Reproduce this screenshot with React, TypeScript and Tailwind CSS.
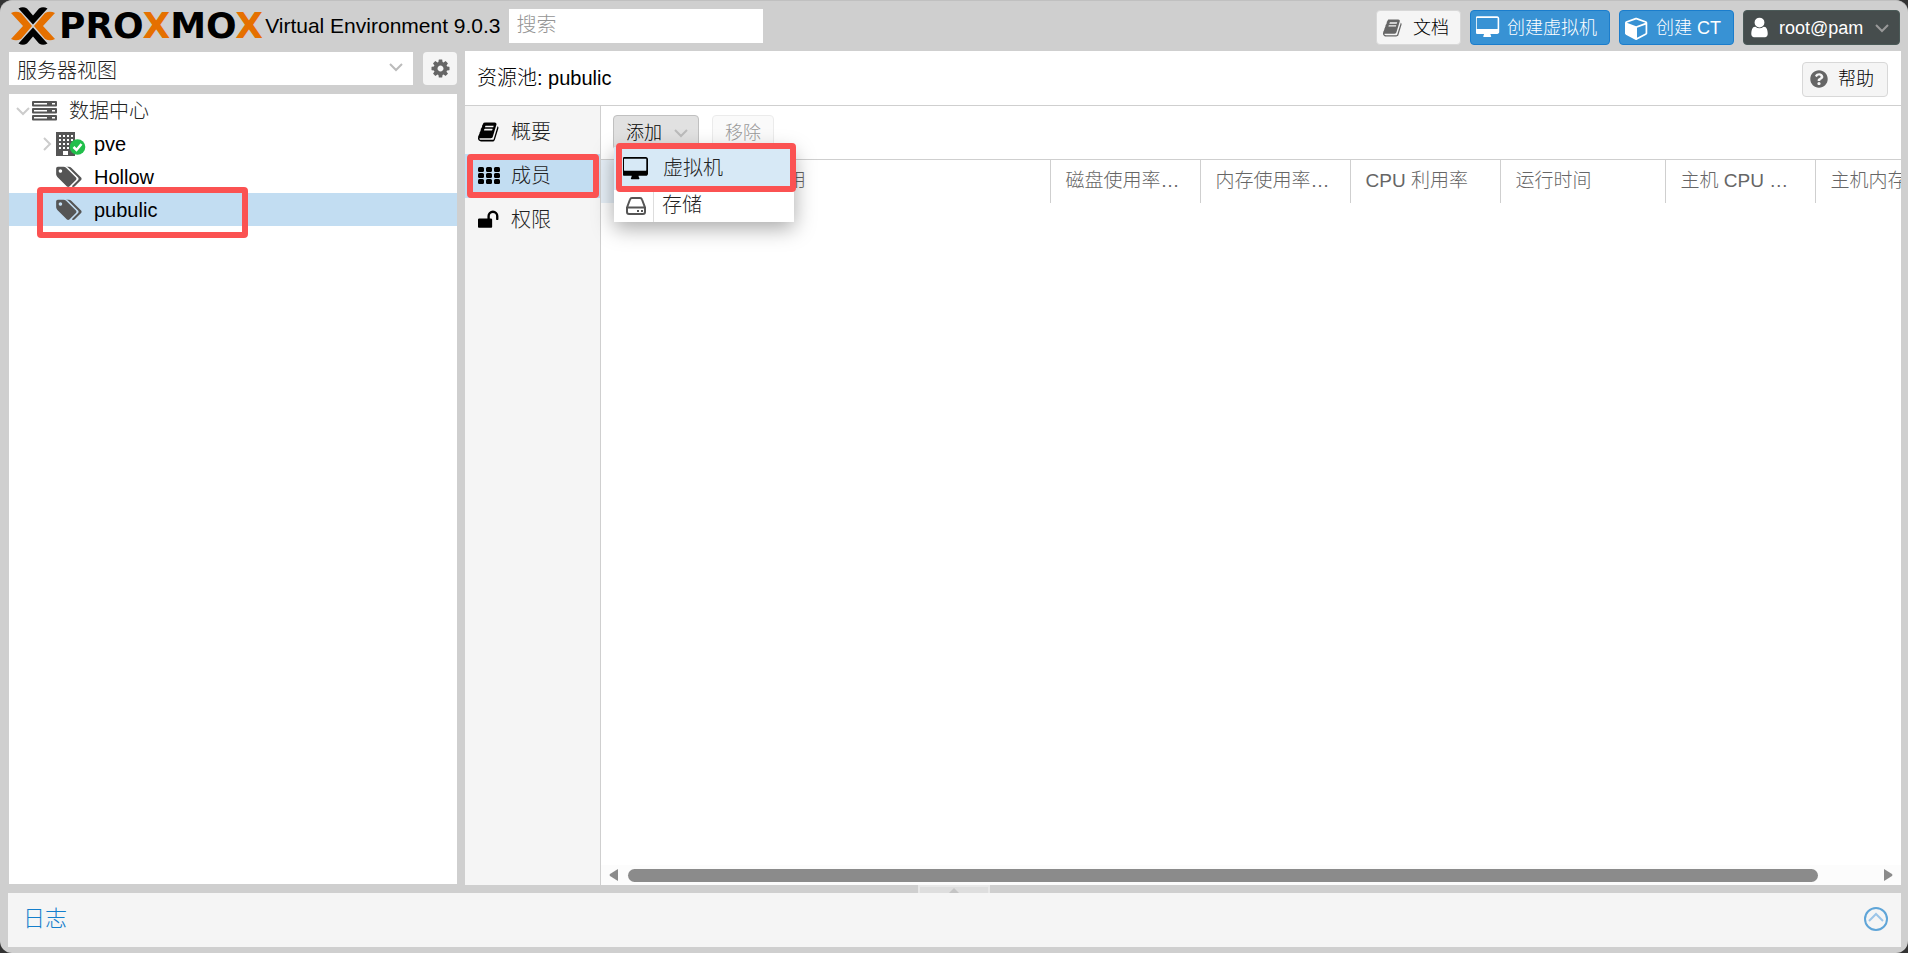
import type { ReactNode } from "react";
import { FaQuestionCircle } from "react-icons/fa";

const PATHS = {
    book: "M1639 478q40 57 18 129l-275 906q-19 64-76.5 107.5t-122.5 43.5h-923q-77 0-148.500-53.500t-99.500-131.500q-24-67-2-127 0-4 3-27t4-37q1-8-3-21.500t-3-19.500q2-11 8-21t16.500-23.500 16.500-23.500q23-38 45-91.500t30-91.500q3-10 .5-30t-.5-28q3-11 17-28t17-23q21-36 42-92t25-90q1-9-2.500-32t.5-28q4-13 22-30.500t22-22.500q19-26 42.500-84.500t27.500-96.500q1-8-3-25.500t-2-26.500q2-8 9-18t18-23 17-21q8-12 16.500-30.500t15-35 16-36 19.500-32 26.500-23.500 36-11.500 47.500 5.500l-1 3q38-9 51-9h761q74 0 114 56t18 130l-274 906q-36 119-71.500 153.500t-128.500 34.500h-869q-27 0-38 15-11 16-1 43 24 70 144 70h923q29 0 56-15.500t35-41.500l300-987q7-22 5-57 38 15 59 43zm-1064 2q-4 13 2 22.500t20 9.500h608q13 0 25.500-9.500t16.500-22.500l21-64q4-13-2-22.500t-20-9.500h-608q-13 0-25.500 9.500t-16.500 22.500zm-83 256q-4 13 2 22.500t20 9.500h608q13 0 25.500-9.500t16.500-22.500l21-64q4-13-2-22.500t-20-9.500h-608q-13 0-25.500 9.500t-16.500 22.500z",
    desktop:
        "M1728 992v-832q0-13-9.500-22.500t-22.500-9.500h-1600q-13 0-22.500 9.500t-9.500 22.500v832q0 13 9.500 22.500t22.500 9.500h1600q13 0 22.500-9.500t9.500-22.500zm128-832v1088q0 66-47 113t-113 47h-544q0 37 16 77.500t32 71 16 43.500q0 26-19 45t-45 19h-512q-26 0-45-19t-19-45q0-14 16-44t32-70 16-78h-544q-66 0-113-47t-47-113v-1088q0-66 47-113t113-47h1600q66 0 113 47t47 113z",
    cube: "M896 1629l640-349v-636l-640 233v752zm-64-865l698-254-698-254-698 254 698 254zm832-252v768q0 35-18 65t-49 47l-704 384q-28 16-61 16t-61-16l-704-384q-31-17-49-47t-18-65v-768q0-40 23-73t61-47l704-256q22-8 44-8t44 8l704 256q38 14 61 47t23 73z",
    user: "M1536 1399q0 109-62.500 187t-150.500 78h-854q-88 0-150.500-78t-62.500-187q0-85 8.500-160.500t31.500-152 58.500-131 94-89 134.500-34.500q131 128 313 128t313-128q76 0 134.500 34.500t94 89 58.500 131 31.500 152 8.500 160.500zm-256-887q0 159-112.500 271.500t-271.500 112.500-271.500-112.500-112.500-271.500 112.500-271.500 271.500-112.500 271.500 112.500 112.500 271.500z",
    cog: "M1152 896q0-106-75-181t-181-75-181 75-75 181 75 181 181 75 181-75 75-181zm512-109v222q0 12-8 23t-20 13l-185 28q-19 54-39 91 35 50 107 138 10 12 10 25t-9 23q-27 37-99 108t-94 71q-12 0-26-9l-138-108q-44 23-91 38-16 136-29 186-7 28-36 28h-222q-14 0-24.500-8.500t-11.500-21.500l-28-184q-49-16-90-37l-141 107q-10 9-25 9-14 0-25-11-126-114-165-168-7-10-7-23 0-12 8-23 15-21 51-66.500t54-70.500q-27-50-41-99l-183-27q-13-2-21-12.500t-8-23.500v-222q0-12 8-23t19-13l186-28q14-46 39-92-40-57-107-138-10-12-10-24 0-10 9-23 26-36 98.500-107.500t94.500-71.500q13 0 26 10l138 107q44-23 91-38 16-136 29-186 7-28 36-28h222q14 0 24.500 8.500t11.500 21.500l28 184q49 16 90 37l142-107q9-9 24-9 13 0 25 10 129 119 165 170 7 8 7 22 0 12-8 23-15 21-51 66.500t-54 70.500q26 50 41 98l183 28q13 2 21 12.500t8 23.500z",
    tags: "M448 448q0-53-37.500-90.500t-90.500-37.500-90.500 37.500-37.500 90.500 37.500 90.500 90.500 37.500 90.500-37.500 37.500-90.500zm1067 576q0 53-37 90l-491 492q-39 37-91 37-53 0-90-37l-715-716q-38-37-64.500-101t-26.500-117v-416q0-52 38-90t90-38h416q53 0 117 26.500t102 64.500l715 714q37 39 37 91zm384 0q0 53-37 90l-491 492q-39 37-91 37-36 0-59-14t-53-45l470-470q37-37 37-90 0-52-37-91l-715-714q-38-38-102-64.500t-117-26.500h224q53 0 117 26.500t102 64.500l715 714q37 39 37 91z",
    unlock: "M1664 576v256q0 26-19 45t-45 19h-64q-26 0-45-19t-19-45v-256q0-106-75-181t-181-75-181 75-75 181v192h96q40 0 68 28t28 68v576q0 40-28 68t-68 28h-960q-40 0-68-28t-28-68v-576q0-40 28-68t68-28h672v-192q0-185 131.500-316.500t316.500-131.500 316.500 131.500 131.500 316.500z",
};

const Icon = ({
    name,
    className,
}: {
    name: keyof typeof PATHS;
    className: string;
}) => (
    <svg
        viewBox={
            name === "desktop" || name === "tags"
                ? "0 0 1920 1792"
                : "0 0 1792 1792"
        }
        className={`shrink-0 ${className}`}
        fill="currentColor"
        aria-hidden="true"
    >
        <path d={PATHS[name]} />
    </svg>
);

const Chevron = ({ className }: { className: string }) => (
    <svg
        viewBox="0 0 14 14"
        className={`h-3.5 w-3.5 shrink-0 ${className}`}
        fill="none"
        stroke="currentColor"
        strokeWidth="2"
        aria-hidden="true"
    >
        <path d="M1 4l6 6 6-6" />
    </svg>
);

const Grid = () => (
    <svg viewBox="0 0 22 18" className="h-[18px] w-[22px]" aria-hidden="true">
        {[0, 6, 12].map((y) =>
            [0, 8, 16].map((x) => (
                <rect key={`${x}-${y}`} x={x} y={y} width="6" height="5" rx="1.500" />
            )),
        )}
    </svg>
);

const Server = () => (
    <svg viewBox="0 0 25 20" className="h-5 w-[25px] shrink-0" aria-hidden="true">
        {[0, 7, 14].map((y) => (
            <g key={y}>
                <rect y={y} width="25" height="5.500" rx="1" fill="#555" />
                <rect x="2" y={y + 2} width="13" height="1.500" fill="#fff" />
                <rect x="20" y={y + 2} width="3" height="1.500" fill="#fff" />
            </g>
        ))}
    </svg>
);

const Building = () => (
    <svg viewBox="0 0 30 26" className="h-[26px] w-[30px]" aria-hidden="true">
        <rect y="1" width="19" height="24" fill="#555" />
        {[4, 8, 12, 16].map((y) =>
            [3, 7, 11, 15].map((x) => (
                <rect key={`${x}-${y}`} x={x} y={y} width="2" height="2" fill="#fff" />
            )),
        )}
        <rect x="7" y="20" width="5" height="4" fill="#fff" />
        <circle cx="21.500" cy="16" r="7.800" fill="#21bf4b" />
        <path d="M17.500 16l3 3 5-6" fill="none" stroke="#fff" strokeWidth="2.500" />
    </svg>
);

const Drive = () => (
    <svg
        viewBox="0 0 20 18"
        className="h-[18px] w-5"
        fill="none"
        stroke="#555"
        strokeWidth="2"
        aria-hidden="true"
    >
        <path d="M1 10.500L4 2.500Q4.500 1 6 1h8q1.500 0 2 1.500l3 8V15q0 2-2 2H3q-2 0-2-2zM1 10.500h18" />
        <path d="M11 14h2M15 14h2" />
    </svg>
);

const Logo = () => (
    <div className="flex items-center">
        <svg viewBox="0 0 44 38" className="h-[38px] w-11" aria-hidden="true">
            <g fill="#e57000">
                <path d="M0 6Q5 3.500 10 6L21 19L10 32Q5 34.500 0 32L12 19z" />
                <path d="M44 6Q39 3.500 34 6L23 19L34 32Q39 34.500 44 32L32 19z" />
            </g>
            <path d="M7.500 1.500Q12-1 16 1.500L22 8.500L28 1.500Q32-1 36.500 1.500L22 17.500z" />
            <path d="M7.500 36.500Q12 39 16 36.500L22 29.500L28 36.500Q32 39 36.500 36.500L22 20.500z" />
        </svg>
        <span className="ml-1 font-['DejaVu_Sans'] text-[36px] leading-none font-bold text-black">
            PRO<span className="text-[#e57000]">X</span>MO
            <span className="text-[#e57000]">X</span>
        </span>
    </div>
);

const Highlight = ({ className }: { className: string }) => (
    <div
        className={`pointer-events-none absolute z-20 rounded-sm border-6 border-[#fb5252] ${className}`}
    />
);

const TreeRow = ({
    icon,
    label,
    className = "",
}: {
    icon: ReactNode;
    label: string;
    className?: string;
}) => (
    <li className={`relative flex h-[33px] items-center ${className}`}>
        {icon}
        {label}
    </li>
);

const columns = [
    { label: "磁盘使用率…", width: "w-[150px]" },
    { label: "内存使用率…", width: "w-[150px]" },
    { label: "CPU 利用率", width: "w-[150px]" },
    { label: "运行时间", width: "w-[165px]" },
    { label: "主机 CPU …", width: "w-[150px]" },
    { label: "主机内存使用率", width: "w-[165px]" },
];

const Header = () => (
    <header className="flex h-[50px] items-center pr-2 pb-px pl-[11px] whitespace-nowrap">
        <Logo />
        <span className="ml-0.5 text-[21px]">Virtual Environment 9.0.3</span>
        <input
            aria-label="搜索"
            placeholder="搜索"
            className="ml-2 h-[34px] w-[254px] bg-white px-2 placeholder:text-[#949494]"
        />
        <div className="ml-auto flex gap-[9px] pt-1 text-lg">
            <button className="flex h-[35px] w-[85px] items-center rounded border border-[#d8d8d8] bg-[#f5f5f5] pl-1.5">
                <Icon name="book" className="mr-2.5 h-5 w-5 text-[#666]" />
                文档
            </button>
            <button className="flex h-[35px] w-[140px] items-center rounded border border-[#1b7dcc] bg-[#3892d4] pl-[5px] text-white">
                <Icon name="desktop" className="mr-[7px] h-[23px] w-6" />
                创建虚拟机
            </button>
            <button className="flex h-[35px] w-[115px] items-center rounded border border-[#1b7dcc] bg-[#3892d4] pl-[5px] text-white">
                <Icon name="cube" className="mr-[7px] h-6 w-6" />
                创建 CT
            </button>
            <button className="flex h-[35px] w-[157px] items-center rounded border border-[#4b5a58] bg-[#464d4d] pl-1 text-white">
                <Icon name="user" className="mr-2 h-[23px] w-[23px]" />
                root@pam
                <Chevron className="ml-3 text-[#999]" />
            </button>
        </div>
    </header>
);

const Sidebar = () => (
    <aside className="flex w-[448px] shrink-0 flex-col gap-[9px] pt-px pb-px">
        <div className="flex h-[33px] gap-2.5">
            <div className="relative flex-1">
                <select
                    aria-label="视图"
                    className="h-full w-full appearance-none bg-white px-2 pt-1 text-[#222]"
                >
                    <option>服务器视图</option>
                </select>
                <Chevron className="pointer-events-none absolute top-2 right-2.5 text-[#bbb]" />
            </div>
            <button
                aria-label="设置"
                className="flex w-[34px] items-center justify-center rounded bg-[#f5f5f5]"
            >
                <Icon name="cog" className="h-[21px] w-[21px] text-[#666]" />
            </button>
        </div>
        <ul className="flex-1 bg-white">
            <TreeRow
                className="pl-[7px] text-[#222]"
                icon={
                    <>
                        <Chevron className="mr-0.5 text-[#ccc]" />
                        <Server />
                        <span className="w-3" />
                    </>
                }
                label="数据中心"
            />
            <TreeRow
                className="gap-2 pl-[47px]"
                icon={
                    <>
                        <Chevron className="absolute left-[31px] -rotate-90 text-[#ccc]" />
                        <Building />
                    </>
                }
                label="pve"
            />
            <TreeRow
                className="gap-3 pl-[47px]"
                icon={<Icon name="tags" className="h-6 w-[26px] text-[#555]" />}
                label="Hollow"
            />
            <TreeRow
                className="gap-3 bg-[#c2ddf2] pl-[47px]"
                icon={
                    <>
                        <Icon name="tags" className="h-6 w-[26px] text-[#555]" />
                        <Highlight className="-top-1.5 left-7 h-[51px] w-[211px]" />
                    </>
                }
                label="pubulic"
            />
        </ul>
    </aside>
);

const SideTabs = () => (
    <nav className="w-[136px] shrink-0 border-r border-[#cfcfcf] bg-[#f5f5f5] pt-1 text-[#222]">
        <a href="#summary" className="flex h-11 items-center pl-[13px]">
            <Icon name="book" className="mr-[11px] h-[22px] w-[22px] text-black" />
            概要
        </a>
        <a
            href="#members"
            className="relative flex h-11 items-center gap-[11px] bg-[#c2ddf2] pl-[13px]"
        >
            <Grid />
            成员
            <Highlight className="top-0 left-0.5 h-11 w-[132px]" />
        </a>
        <a href="#permissions" className="flex h-11 items-center pl-[13px]">
            <Icon name="unlock" className="mr-[11px] h-[22px] w-[22px] text-black" />
            权限
        </a>
    </nav>
);

const AddMenu = () => (
    <div className="absolute top-8 left-px z-10 w-[180px] bg-white text-[#222] shadow-[0_6px_20px_rgba(0,0,0,0.35)]">
        <button className="relative flex h-[43px] w-full items-center bg-[#d7e9f6] pl-[9px]">
            <Icon name="desktop" className="mr-3.5 h-6 w-[26px] text-black" />
            虚拟机
            <Highlight className="-top-1 left-0.5 h-[49px] w-[180px]" />
        </button>
        <button className="flex h-8 w-full items-center">
            <span className="flex h-full w-10 items-center border-r border-[#ddd] pl-3">
                <Drive />
            </span>
            <span className="pl-2">存储</span>
        </button>
    </div>
);

const Members = () => (
    <section className="flex min-w-0 flex-1 flex-col bg-white">
        <div className="flex h-[53px] shrink-0 items-start gap-[13px] pt-[9px] pl-3 text-lg">
            <div className="relative">
                <button className="flex h-[35px] w-[86px] items-center rounded border border-[#c0c0c0] bg-[#e1e1e1] pl-3">
                    添加
                    <Chevron className="ml-3 text-[#bbb]" />
                </button>
                <div className="text-[20px]">
                    <AddMenu />
                </div>
            </div>
            <button
                disabled
                className="h-[35px] w-[62px] rounded border border-[#ebebeb] bg-[#fafafa] text-[#999]"
            >
                移除
            </button>
        </div>
        <div className="flex-1 overflow-hidden border-t border-[#cfcfcf]">
            <table className="w-max table-fixed text-left text-[19px] whitespace-nowrap text-[#666]">
                <thead>
                    <tr className="h-[43px]">
                        <th className="w-[150px] bg-[#e7f0f8]" />
                        <th className="w-[299px] border-r border-[#cfcfcf] pl-9 font-light">
                            用
                        </th>
                        {columns.map((column) => (
                            <th
                                key={column.label}
                                className={`border-r border-[#cfcfcf] pl-[15px] font-light ${column.width}`}
                            >
                                {column.label}
                            </th>
                        ))}
                    </tr>
                </thead>
            </table>
        </div>
        {/* Horizontal scrollbar */}
        <div className="flex h-5 shrink-0 items-center bg-[#fcfcfc] px-2 text-[#8b8b8b]">
            <svg viewBox="0 0 10 12" className="h-3 w-2.5" fill="currentColor">
                <path d="M9 0v12L1 7q-1-1 0-2z" />
            </svg>
            <div className="mr-[65px] ml-[9px] h-[13px] flex-1 rounded-full bg-[#8b8b8b]" />
            <svg viewBox="0 0 10 12" className="h-3 w-2.5" fill="currentColor">
                <path d="M1 0v12l8-5q1-1 0-2z" />
            </svg>
        </div>
    </section>
);

export default function App() {
    return (
        <div className="h-screen bg-[#333] font-['Liberation_Sans','Noto_Sans_CJK_SC',sans-serif] text-[20px] font-light text-black">
            <div className="flex h-full flex-col overflow-hidden rounded-xl border-t border-[#c0c0c0] bg-[#cfcfcf]">
                <Header />
                <main className="flex min-h-0 flex-1 gap-2 pr-[7px] pl-[9px]">
                    <Sidebar />
                    <div className="flex min-w-0 flex-1 flex-col">
                        <div className="flex h-[55px] shrink-0 items-center justify-between border-b border-[#cfcfcf] bg-white pr-[13px] pl-3">
                            <h1>资源池: pubulic</h1>
                            <button className="mt-0.5 flex h-[35px] w-[86px] items-center rounded border border-[#d8d8d8] bg-[#f5f5f5] pl-[7px] text-lg">
                                <FaQuestionCircle className="mr-2.5 h-[18px] w-[18px] text-[#666]" />
                                帮助
                            </button>
                        </div>
                        <div className="flex min-h-0 flex-1">
                            <SideTabs />
                            <Members />
                        </div>
                    </div>
                </main>
                <div className="flex h-2 shrink-0 justify-center">
                    <button
                        aria-label="展开日志"
                        className="flex w-[72px] items-end justify-center border-2 border-b-0 border-[#e8e8e8] bg-[#dedede]"
                    >
                        <svg viewBox="0 0 10 5" className="h-[5px] w-2.5" fill="#c4c4c4">
                            <path d="M0 5l5-5 5 5z" />
                        </svg>
                    </button>
                </div>
                <footer className="mr-[7px] mb-1.5 ml-2 flex h-[54px] shrink-0 items-center justify-between bg-[#f5f5f5] pr-[13px] pb-1 pl-[15px]">
                    <h2 className="text-[22px] text-[#157fcc]">日志</h2>
                    <button aria-label="展开" className="pt-0.5">
                        <svg
                            viewBox="0 0 24 24"
                            className="h-6 w-6"
                            fill="none"
                            strokeWidth="2"
                        >
                            <circle cx="12" cy="12" r="11" stroke="#5fa5d8" />
                            <path d="M5 14l7-7 7 7" stroke="#9cc5e8" />
                        </svg>
                    </button>
                </footer>
            </div>
        </div>
    );
}
